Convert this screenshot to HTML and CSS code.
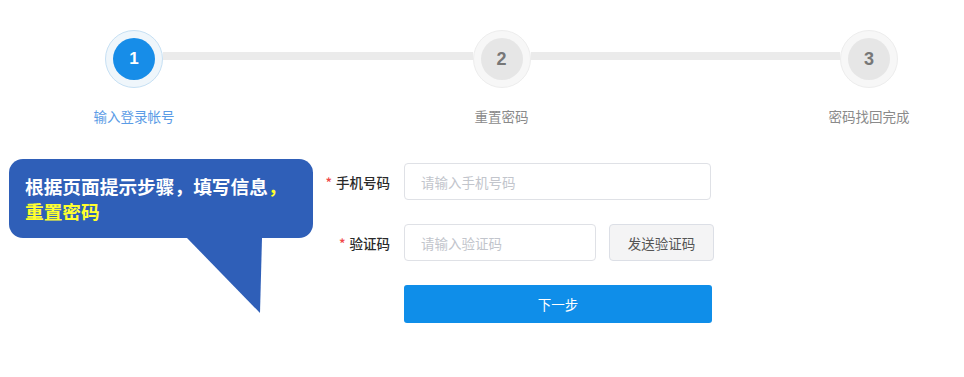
FILE: index.html
```html
<!DOCTYPE html>
<html lang="zh-CN">
<head>
<meta charset="utf-8">
<title>找回密码</title>
<link rel="stylesheet" href="styles.css">
</head>
<body>
<div class="steps">
  <div class="step active">
    <div class="ring"><div class="dot">1</div></div>
    <div class="label">输入登录帐号</div>
  </div>
  <div class="line"></div>
  <div class="step">
    <div class="ring"><div class="dot">2</div></div>
    <div class="label">重置密码</div>
  </div>
  <div class="line"></div>
  <div class="step">
    <div class="ring"><div class="dot">3</div></div>
    <div class="label">密码找回完成</div>
  </div>
</div>

<div class="main">
  <div class="callout">
    <div class="bubble">根据页面提示步骤，填写信息<span class="hl">，</span><br><span class="hl">重置密码</span></div>
    <svg class="tail" width="76" height="76" viewBox="0 0 76 76"><polygon points="0,0 75,0 73,75" fill="#2f5fb8"/></svg>
  </div>
  <form class="form">
    <div class="row">
      <label class="flabel"><span class="req">*</span>手机号码</label>
      <input class="input wide" type="text" placeholder="请输入手机号码">
    </div>
    <div class="row">
      <label class="flabel"><span class="req">*</span>验证码</label>
      <input class="input short" type="text" placeholder="请输入验证码">
      <button class="send" type="button">发送验证码</button>
    </div>
    <div class="row">
      <span class="flabel"></span>
      <button class="next" type="button">下一步</button>
    </div>
  </form>
</div>
</body>
</html>
```

FILE: styles.css
```css
html, body {
  margin: 0;
  padding: 0;
  background: #fff;
  font-family: "Noto Sans CJK SC", "Noto Sans", sans-serif;
}

.steps {
  display: flex;
  align-items: flex-start;
  width: 793px;
  margin: 30px 0 0 105px;
}

.step {
  width: 58px;
  display: flex;
  flex-direction: column;
  align-items: center;
}

.ring {
  width: 58px;
  height: 58px;
  box-sizing: border-box;
  border-radius: 50%;
  border: 1px solid #ededed;
  background: #f7f7f7;
  display: flex;
  align-items: center;
  justify-content: center;
}

.dot {
  width: 42px;
  height: 42px;
  border-radius: 50%;
  background: #e6e6e6;
  color: #777;
  display: flex;
  align-items: center;
  justify-content: center;
  font-family: "Liberation Sans", Arial, sans-serif;
  font-size: 18px;
  font-weight: bold;
}

.step.active .ring {
  background: #eff6fb;
  border-color: #c6e0f4;
}

.step.active .dot {
  background: #178de8;
  color: #fff;
  font-size: 17px;
}

.label {
  margin-top: 19px;
  white-space: nowrap;
  font-size: 13.5px;
  line-height: 18px;
  color: #8a8a8a;
}

.step.active .label {
  color: #5b9ce6;
}

.line {
  flex: 1;
  height: 8px;
  margin-top: 22px;
  background: #ebebeb;
}

.main {
  display: flex;
  align-items: flex-start;
  margin-top: 34px;
}

.callout {
  width: 304px;
  margin-left: 9px;
}

.bubble {
  height: 79px;
  box-sizing: border-box;
  padding: 14px 12px 0 16px;
  background: #2f5fb8;
  border-radius: 14px;
  color: #fff;
  font-weight: bold;
  font-size: 18.7px;
  line-height: 25px;
}

.hl {
  color: #ffff2e;
}

.tail {
  display: block;
  margin-left: 178px;
}

.form {
  margin: 4px 0 0 1px;
}

.row {
  display: flex;
  align-items: center;
  height: 37px;
  margin-bottom: 24px;
}

.flabel {
  width: 76px;
  margin-right: 14px;
  text-align: right;
  font-size: 13.5px;
  font-weight: 500;
  color: #2a2a2a;
}

.req {
  color: #f04848;
  margin-right: 4px;
}

.input {
  box-sizing: border-box;
  height: 37px;
  border: 1px solid #dfe1e6;
  border-radius: 4px;
  padding: 0 0 0 16px;
  font-family: inherit;
  font-size: 13.5px;
  color: #333;
  outline: none;
}

.input::placeholder {
  color: #c2c5cc;
}

.wide {
  width: 307px;
}

.short {
  width: 192px;
}

.send {
  box-sizing: border-box;
  width: 105px;
  height: 37px;
  margin-left: 13px;
  background: #f4f4f5;
  border: 1px solid #dcdfe6;
  border-radius: 4px;
  font-family: inherit;
  font-size: 13.5px;
  color: #555;
  padding: 0;
}

.next {
  box-sizing: border-box;
  width: 308px;
  height: 38px;
  background: #0f8ee9;
  border: none;
  border-radius: 3px;
  color: #fff;
  font-family: inherit;
  font-size: 13.5px;
  padding: 0;
}
```
